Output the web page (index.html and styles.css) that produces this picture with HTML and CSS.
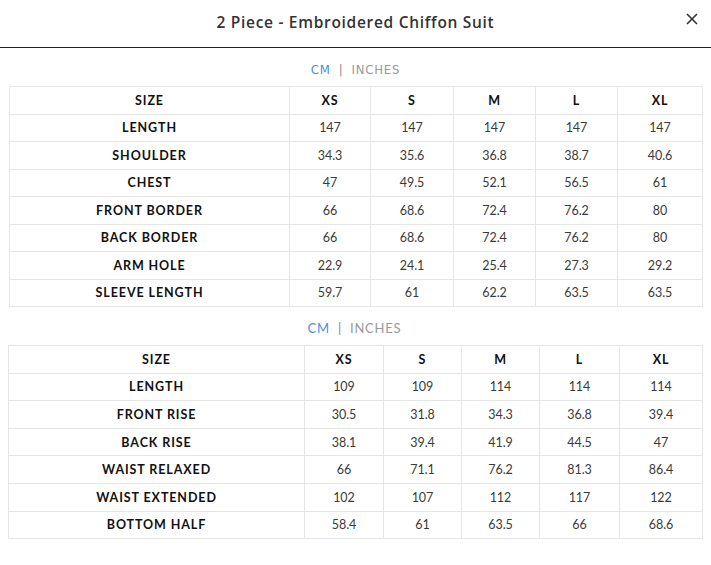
FILE: index.html
```html
<!DOCTYPE html>
<html>
<head>
<meta charset="utf-8">
<link rel="stylesheet" href="styles.css">
</head>
<body>
<div class="modal">
  <header class="modal-head">
    <h1 class="title">2 Piece - Embroidered Chiffon Suit</h1>
    <span class="close">
      <svg width="12" height="12" viewBox="0 0 12 12"><path d="M1 1L11 11M11 1L1 11" stroke="#333" stroke-width="1.6" fill="none"/></svg>
    </span>
  </header>
  <div class="body">
    <div class="units"><span class="cm">CM</span><span class="sep">|</span><span class="in">INCHES</span></div>
    <table class="chart t1">
      <colgroup><col class="c0"><col class="c1"><col class="c2"><col class="c3"><col class="c4"><col class="c5"></colgroup>
      <tr class="hd"><th>SIZE</th><th>XS</th><th>S</th><th>M</th><th>L</th><th>XL</th></tr>
      <tr><th>LENGTH</th><td>147</td><td>147</td><td>147</td><td>147</td><td>147</td></tr>
      <tr><th>SHOULDER</th><td>34.3</td><td>35.6</td><td>36.8</td><td>38.7</td><td>40.6</td></tr>
      <tr><th>CHEST</th><td>47</td><td>49.5</td><td>52.1</td><td>56.5</td><td>61</td></tr>
      <tr><th>FRONT BORDER</th><td>66</td><td>68.6</td><td>72.4</td><td>76.2</td><td>80</td></tr>
      <tr><th>BACK BORDER</th><td>66</td><td>68.6</td><td>72.4</td><td>76.2</td><td>80</td></tr>
      <tr><th>ARM HOLE</th><td>22.9</td><td>24.1</td><td>25.4</td><td>27.3</td><td>29.2</td></tr>
      <tr><th>SLEEVE LENGTH</th><td>59.7</td><td>61</td><td>62.2</td><td>63.5</td><td>63.5</td></tr>
    </table>
    <div class="units second"><span class="cm">CM</span><span class="sep">|</span><span class="in">INCHES</span></div>
    <table class="chart t2">
      <colgroup><col class="c0"><col class="c1"><col class="c2"><col class="c3"><col class="c4"><col class="c5"></colgroup>
      <tr class="hd"><th>SIZE</th><th>XS</th><th>S</th><th>M</th><th>L</th><th>XL</th></tr>
      <tr><th>LENGTH</th><td>109</td><td>109</td><td>114</td><td>114</td><td>114</td></tr>
      <tr><th>FRONT RISE</th><td>30.5</td><td>31.8</td><td>34.3</td><td>36.8</td><td>39.4</td></tr>
      <tr><th>BACK RISE</th><td>38.1</td><td>39.4</td><td>41.9</td><td>44.5</td><td>47</td></tr>
      <tr><th>WAIST RELAXED</th><td>66</td><td>71.1</td><td>76.2</td><td>81.3</td><td>86.4</td></tr>
      <tr><th>WAIST EXTENDED</th><td>102</td><td>107</td><td>112</td><td>117</td><td>122</td></tr>
      <tr><th>BOTTOM HALF</th><td>58.4</td><td>61</td><td>63.5</td><td>66</td><td>68.6</td></tr>
    </table>
  </div>
</div>
</body>
</html>
```

FILE: styles.css
```css
html, body {
  margin: 0;
  padding: 0;
  background: #fff;
}
body {
  font-family: "Open Sans", "Liberation Sans", sans-serif;
  color: #222;
}
.modal {
  width: 711px;
}
.modal-head {
  height: 47px;
  border-bottom: 1px solid #222;
  display: flex;
  align-items: center;
  justify-content: center;
  position: relative;
}
.title {
  margin: 0;
  font-size: 15.5px;
  font-weight: 600;
  color: #333;
  letter-spacing: 0.7px;
  margin-top: -4px;
}
.close {
  position: absolute;
  right: 13px;
  top: 13px;
  width: 12px;
  height: 12px;
  display: block;
}
.close svg { display: block; }
.body {
  padding: 0 9px 0 9px;
}
.units {
  text-align: center;
  font-family: "DejaVu Sans Condensed", "Liberation Sans Narrow", sans-serif;
  font-size: 13px;
  letter-spacing: 0.8px;
  height: 38px;
  line-height: 16px;
  padding-top: 14px;
  box-sizing: border-box;
}
.units.second {
  height: 38px;
  padding-top: 13px;
  font-family: "Lato", sans-serif;
  font-size: 13px;
  letter-spacing: 0.8px;
  margin-left: -2px;
}
.cm { color: #4a90e2; }
.sep { color: #888; margin: 0 8px; }
.in { color: #999; }
.chart {
  border-collapse: collapse;
  table-layout: fixed;
  width: 693px;
}
.t2 { margin-left: -1px; width: 694px; }
.chart th, .chart td {
  border: 1px solid #e6e6e6;
  text-align: center;
  padding: 0;
  font-size: 12px;
}
.t1 th, .t1 td { height: 26.5px; }
.t2 th, .t2 td { height: 26.6px; }
.chart th {
  font-family: "Lato", sans-serif;
  font-weight: 700;
  color: #111;
  letter-spacing: 0.9px;
  font-size: 12.5px;
}
.chart td {
  font-family: "Lato", sans-serif;
  font-weight: 400;
  color: #3a3a3a;
  font-size: 12.5px;
}
.t1 .c0 { width: 280px; }
.t1 .c1 { width: 81px; }
.t1 .c2 { width: 83px; }
.t1 .c3 { width: 82px; }
.t1 .c4 { width: 82px; }
.t1 .c5 { width: 85px; }
.t2 .c0 { width: 296px; }
.t2 .c1 { width: 79px; }
.t2 .c2 { width: 78px; }
.t2 .c3 { width: 78px; }
.t2 .c4 { width: 80px; }
.t2 .c5 { width: 83px; }
```
